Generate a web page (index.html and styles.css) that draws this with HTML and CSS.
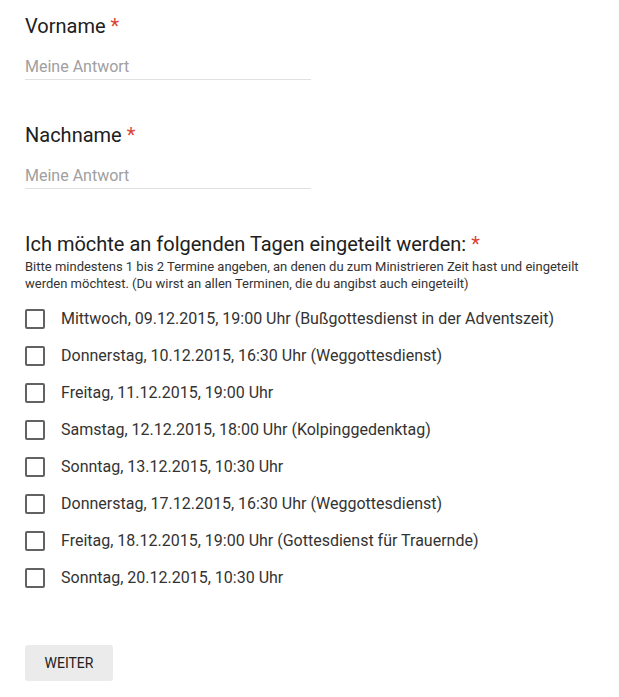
FILE: index.html
```html
<!DOCTYPE html>
<html lang="de">

<head>
  <meta charset="UTF-8" />
  <title>Ministranten Einteilung</title>
  <link rel="stylesheet" href="styles.css">
</head>

<body>
  <form class="form">
    <div class="question">
      <div class="title">Vorname <span class="required">*</span></div>
      <div class="answer">Meine Antwort</div>
    </div>

    <div class="question">
      <div class="title">Nachname <span class="required">*</span></div>
      <div class="answer">Meine Antwort</div>
    </div>

    <div class="question">
      <div class="title">Ich möchte an folgenden Tagen eingeteilt werden: <span class="required">*</span></div>
      <div class="description">Bitte mindestens 1 bis 2 Termine angeben, an denen du zum Ministrieren Zeit hast und eingeteilt werden möchtest. (Du wirst an allen Terminen, die du angibst auch eingeteilt)</div>
      <div class="options">
        <label class="option"><span class="box"></span>Mittwoch, 09.12.2015, 19:00 Uhr (Bußgottesdienst in der Adventszeit)</label>
        <label class="option"><span class="box"></span>Donnerstag, 10.12.2015, 16:30 Uhr (Weggottesdienst)</label>
        <label class="option"><span class="box"></span>Freitag, 11.12.2015, 19:00 Uhr</label>
        <label class="option"><span class="box"></span>Samstag, 12.12.2015, 18:00 Uhr (Kolpinggedenktag)</label>
        <label class="option"><span class="box"></span>Sonntag, 13.12.2015, 10:30 Uhr</label>
        <label class="option"><span class="box"></span>Donnerstag, 17.12.2015, 16:30 Uhr (Weggottesdienst)</label>
        <label class="option"><span class="box"></span>Freitag, 18.12.2015, 19:00 Uhr (Gottesdienst für Trauernde)</label>
        <label class="option"><span class="box"></span>Sonntag, 20.12.2015, 10:30 Uhr</label>
      </div>
    </div>

    <div class="actions">
      <button type="button" class="next">WEITER</button>
    </div>
  </form>
</body>

</html>
```

FILE: styles.css
```css
body {
  margin: 0;
  padding: 0;
  background: #fff;
  font-family: Roboto, "Liberation Sans", sans-serif;
  color: #212121;
}

.form {
  padding: 14px 25px 0 25px;
}

.question {
  margin-bottom: 43px;
}

.title {
  font-size: 20px;
  line-height: 24px;
  color: #202020;
}

.required {
  color: #db4437;
}

.answer {
  width: 286px;
  margin-top: 19px;
  padding-bottom: 2px;
  font-size: 16px;
  line-height: 20px;
  color: #a0a0a0;
  border-bottom: 1px solid #e0e0e0;
}

.description {
  max-width: 565px;
  margin-top: 2px;
  font-size: 13px;
  line-height: 17px;
  color: #333;
}

.options {
  margin-top: 8px;
}

.option {
  display: flex;
  align-items: center;
  height: 37px;
  font-size: 16px;
  color: #333;
}

.box {
  width: 16px;
  height: 16px;
  margin-right: 16px;
  border: 2px solid #626262;
  border-radius: 2px;
  flex-shrink: 0;
}

.actions {
  margin-top: -43px;
  padding-top: 49px;
}

.next {
  width: 88px;
  height: 36px;
  border: none;
  border-radius: 3px;
  background: #ebebeb;
  font-family: Roboto, "Liberation Sans", sans-serif;
  font-size: 14px;
  color: #212121;
}
```
